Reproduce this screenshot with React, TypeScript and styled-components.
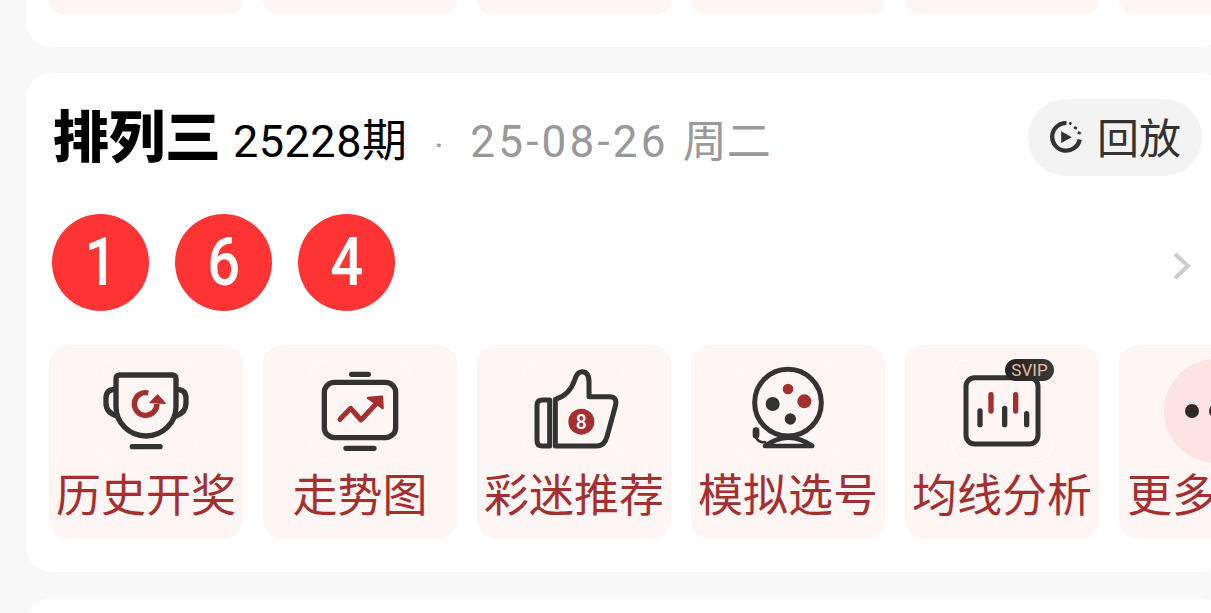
import React from "react";
import styled, { createGlobalStyle } from "styled-components";

const Global = createGlobalStyle`
  html, body { margin: 0; padding: 0; background: #f8f8f8; }
  body { font-family: Roboto, "Noto Sans CJK SC", sans-serif; }
`;

const Page = styled.div`
  width: 1211px;
  height: 613px;
  overflow: hidden;
  display: flex;
  flex-direction: column;
  gap: 26px;
  padding-left: 26px;
  box-sizing: border-box;
`;

const TopCard = styled.section`
  flex: none;
  width: 1200px;
  height: 47px;
  box-sizing: border-box;
  background: #fff;
  border-radius: 0 0 26px 26px;
  padding-left: 23px;
  display: flex;
  gap: 20px;
  overflow: hidden;
`;

const TileStub = styled.div`
  flex: none;
  width: 194px;
  height: 14px;
  background: #fef5f5;
  border-radius: 0 0 20px 20px;
`;

const Card = styled.section`
  flex: none;
  width: 1200px;
  box-sizing: border-box;
  background: #fff;
  border-radius: 26px;
  padding: 26px 24px 33px 23px;
  overflow: hidden;
`;

const NextCard = styled(Card)`
  height: 60px;
  padding: 0;
`;

const Header = styled.div`
  display: flex;
  align-items: center;
  height: 77px;
  padding-left: 4px;
`;

const TitleGroup = styled.div`
  display: flex;
  align-items: baseline;
  flex: 1;
  padding-top: 3px;
`;

const Title = styled.h2`
  margin: 0;
  font: 900 56px/77px "Noto Sans CJK SC", sans-serif;
  color: #000;
`;

const Issue = styled.span`
  margin-left: 12px;
  font: 400 45px/77px Roboto, "Noto Sans CJK SC", sans-serif;
  color: #000;
  letter-spacing: 0.5px;
`;

const Sep = styled.span`
  margin: 0 27px 0 27px;
  font: 400 34px/77px Roboto, sans-serif;
  color: #999;
`;

const DateText = styled.span`
  font: 400 44px/77px Roboto, "Noto Sans CJK SC", sans-serif;
  color: #999;
  letter-spacing: 3.2px;
`;

const DateWeek = styled.span`
  letter-spacing: 0;
`;

const ReplayPill = styled.button`
  flex: none;
  width: 174px;
  height: 77px;
  border: 0;
  padding: 0 0 4px 21px;
  box-sizing: border-box;
  border-radius: 39px;
  background: #f3f3f3;
  display: flex;
  align-items: center;
  gap: 15px;
  font: 400 42px "Noto Sans CJK SC", sans-serif;
  color: #333;
`;

const ReplayGlyph = styled.svg`
  flex: none;
  width: 33px;
  height: 33px;
  margin-top: 3px;
`;

const BallRow = styled.div`
  display: flex;
  align-items: center;
  gap: 26px;
  margin: 38px 10px 0 3px;
`;

const Ball = styled.span`
  flex: none;
  width: 97px;
  height: 97px;
  border-radius: 50%;
  background: #fe3333;
  color: #fff;
  display: flex;
  align-items: center;
  justify-content: center;
  font: 500 66px/1 Roboto, sans-serif;
`;

const BallDigit = styled.span`
  display: block;
  transform: scaleX(0.88);
`;

const Chevron = styled.svg`
  margin: 7px 0 0 auto;
  width: 20px;
  height: 30px;
`;

const TileRow = styled.div`
  display: flex;
  gap: 20px;
  margin-top: 34px;
`;

const Tile = styled.div`
  flex: none;
  width: 194px;
  height: 194px;
  box-sizing: border-box;
  padding: 14px 8px 0;
  background: #fef5f5;
  border-radius: 20px;
  display: flex;
  flex-direction: column;
  align-items: center;
`;

const IconBox = styled.div`
  position: relative;
  flex: none;
  width: 102px;
  height: 102px;
`;

const TileIcon = styled.svg`
  display: block;
  width: 102px;
  height: 102px;
`;

const Label = styled.span`
  margin-top: 2px;
  font: 400 45px/60px "Noto Sans CJK SC", sans-serif;
  color: #a52f2f;
  white-space: nowrap;
`;

const MoreLabel = styled(Label)`
  align-self: flex-start;
  margin-top: 0;
`;

const SvipBadge = styled.span`
  position: absolute;
  left: 54px;
  top: 0;
  width: 49px;
  height: 22px;
  border-radius: 11px;
  background: linear-gradient(90deg, #241f1f, #3a3a3a);
  color: #e8bd9f;
  font: 400 17px/22px Roboto, sans-serif;
  text-align: center;
`;

const MoreCircle = styled.div`
  flex: none;
  width: 104px;
  height: 104px;
  border-radius: 50%;
  background: #fde3e3;
  display: flex;
  align-items: center;
  justify-content: center;
  gap: 10px;
`;

const MoreDot = styled.span`
  width: 14px;
  height: 14px;
  border-radius: 50%;
  background: #2f2a2a;
`;

const INK = "#333";
const RED = "#a52f2f";

const Corners = ({ x, y, opacity = 0.55 }: { x: number; y: number; opacity?: number }) => (
  <path
    transform={`translate(${x} ${y})`}
    d="M2 60 Q2 2 60 2 M246 2 Q304 2 304 60 M304 246 Q304 304 246 304 M60 304 Q2 304 2 246"
    fill="none"
    stroke="#fff"
    strokeWidth="3"
    opacity={opacity}
  />
);

const Trophy = () => (
  <TileIcon viewBox="285 57 306 306">
    <Corners x={285} y={57} />
    <g fill="none" stroke={INK} strokeWidth="16" strokeLinecap="round">
      <path d="M360 105H516Q528 105 528 117V200A90 88 0 0 1 348 200V117Q348 105 360 105Z" />
      <path d="M345 148Q318 148 318 175V190Q318 218 350 228" />
      <path d="M530 148Q558 148 558 175V190Q558 218 528 228" />
      <path d="M397 320H480" />
    </g>
    <path d="M445 159A34 34 0 1 0 471 192" fill="none" stroke={RED} strokeWidth="16" />
    <path d="M450 188L473 165L496 190Z" fill={RED} stroke={RED} strokeWidth="4" strokeLinejoin="round" />
  </TileIcon>
);

const Trend = () => (
  <TileIcon viewBox="927 57 306 306">
    <Corners x={927} y={57} />
    <g fill="none" stroke={INK} strokeWidth="16" strokeLinecap="round">
      <rect x="973" y="127" width="214" height="166" rx="30" />
      <path d="M1055 103H1105M1038 325H1122" />
    </g>
    <path d="M1020 238L1052 205L1083 240L1130 190" fill="none" stroke={RED} strokeWidth="15" strokeLinecap="round" strokeLinejoin="round" />
    <path d="M1104 174L1146 170L1148 204Z" fill={RED} stroke={RED} strokeWidth="7" strokeLinejoin="round" />
  </TileIcon>
);

const Thumb = () => (
  <TileIcon viewBox="160 57 306 306">
    <Corners x={160} y={57} />
    <g fill="none" stroke={INK} strokeWidth="15" strokeLinejoin="round">
      <path d="M240 180H218Q202 180 202 196V302Q202 318 218 318H240Z" />
      <path d="M257 318V178Q300 165 315 120Q322 95 337 95Q358 95 358 125V170H420Q442 170 438 195L412 290Q405 318 380 318Z" />
    </g>
    <circle cx="335" cy="245" r="39" fill={RED} />
    <text x="335" y="266" textAnchor="middle" fontFamily="Roboto, sans-serif" fontWeight="500" fontSize="58" fill="#fff">8</text>
  </TileIcon>
);

const Machine = () => (
  <TileIcon viewBox="801 57 306 306">
    <Corners x={801} y={57} />
    <circle cx="954" cy="188" r="100" fill="none" stroke={INK} strokeWidth="15" />
    <circle cx="954" cy="147" r="16" fill={RED} />
    <circle cx="1003" cy="184" r="21" fill={RED} />
    <circle cx="908" cy="192" r="21" fill={INK} />
    <circle cx="961" cy="237" r="17" fill={INK} />
    <g fill="none" stroke={INK} strokeLinecap="round" strokeLinejoin="round">
      <path d="M885 318Q955 268 1027 318Z" strokeWidth="14" />
      <path d="M858 272V286" strokeWidth="20" />
      <path d="M858 292Q866 310 885 306" strokeWidth="8" />
    </g>
  </TileIcon>
);

const Candles = () => (
  <TileIcon viewBox="183 57 306 306">
    <Corners x={183} y={57} opacity={1} />
    <rect x="228" y="113" width="216" height="199" rx="26" fill="none" stroke={INK} strokeWidth="15" />
    <g fill="none" strokeWidth="16" strokeLinecap="round">
      <path d="M303 164V213M377 164V213" stroke={RED} />
      <path d="M270 213V254M344 205V254M410 221V254" stroke={INK} />
    </g>
  </TileIcon>
);

const ReplayIcon = () => (
  <ReplayGlyph viewBox="265 122 100 100">
    <path d="M318 128A42 42 0 1 0 358 178" fill="none" stroke={INK} strokeWidth="13" />
    <path d="M302 153L334 171L302 189Z" fill={INK} />
    <path d="M326 128L333 131M341 140L349 146M352 157L361 160" stroke={INK} strokeWidth="8" fill="none" />
  </ReplayGlyph>
);

export default function App() {
  return (
    <>
      <Global />
      <Page>
        <TopCard>
          {[0, 1, 2, 3, 4, 5].map((i) => (
            <TileStub key={i} />
          ))}
        </TopCard>
        <Card>
          <Header>
            <TitleGroup>
              <Title>排列三</Title>
              <Issue>25228期</Issue>
              <Sep>·</Sep>
              <DateText>
                25-08-26 <DateWeek>周二</DateWeek>
              </DateText>
            </TitleGroup>
            <ReplayPill>
              <ReplayIcon />
              回放
            </ReplayPill>
          </Header>
          <BallRow>
            <Ball><BallDigit>1</BallDigit></Ball>
            <Ball><BallDigit>6</BallDigit></Ball>
            <Ball><BallDigit>4</BallDigit></Ball>
            <Chevron viewBox="0 0 20 30">
              <path d="M3 3L16 15L3 27" fill="none" stroke="#ccc" strokeWidth="4" />
            </Chevron>
          </BallRow>
          <TileRow>
            <Tile>
              <IconBox><Trophy /></IconBox>
              <Label>历史开奖</Label>
            </Tile>
            <Tile>
              <IconBox><Trend /></IconBox>
              <Label>走势图</Label>
            </Tile>
            <Tile>
              <IconBox><Thumb /></IconBox>
              <Label>彩迷推荐</Label>
            </Tile>
            <Tile>
              <IconBox><Machine /></IconBox>
              <Label>模拟选号</Label>
            </Tile>
            <Tile>
              <IconBox>
                <Candles />
                <SvipBadge>SVIP</SvipBadge>
              </IconBox>
              <Label>均线分析</Label>
            </Tile>
            <Tile>
              <MoreCircle>
                <MoreDot />
                <MoreDot />
                <MoreDot />
              </MoreCircle>
              <MoreLabel>更多</MoreLabel>
            </Tile>
          </TileRow>
        </Card>
        <NextCard />
      </Page>
    </>
  );
}
